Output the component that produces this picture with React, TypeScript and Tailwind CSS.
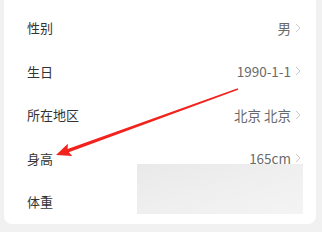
import React from "react";

const rows: { label: string; value: string }[] = [
  { label: "性别", value: "男" },
  { label: "生日", value: "1990-1-1" },
  { label: "所在地区", value: "北京 北京" },
  { label: "身高", value: "165cm" },
  { label: "体重", value: "" },
];

function Chevron() {
  return (
    <svg width="6" height="10" viewBox="0 0 6 10" className="ml-[4px]">
      <path d="M1 1 L5 5 L1 9" fill="none" stroke="#c8c8c8" strokeWidth="1" />
    </svg>
  );
}

export default function App() {
  const tip = [56, 155];
  const start = [238, 89];
  const dx = tip[0] - start[0];
  const dy = tip[1] - start[1];
  const len = Math.hypot(dx, dy);
  const ux = dx / len;
  const uy = dy / len;
  const px = -uy;
  const py = ux;
  const headLen = 15;
  const headHalf = 6.5;
  const bx = tip[0] - ux * headLen;
  const by = tip[1] - uy * headLen;
  const w0 = 0.7;
  const w1 = 1.8;
  const pts = [
    [start[0] + px * w0, start[1] + py * w0],
    [bx + ux * 2 + px * w1, by + uy * 2 + py * w1],
    [bx + px * headHalf, by + py * headHalf],
    [tip[0], tip[1]],
    [bx - px * headHalf, by - py * headHalf],
    [bx + ux * 2 - px * w1, by + uy * 2 - py * w1],
    [start[0] - px * w0, start[1] - py * w0],
  ]
    .map((p) => `${p[0].toFixed(1)},${p[1].toFixed(1)}`)
    .join(" ");

  return (
    <div
      className="relative w-[322px] h-[232px] bg-[#f1f1f1] overflow-hidden"
      style={{ fontFamily: '"Noto Sans CJK SC", "Noto Sans", sans-serif' }}
    >
      <div className="ml-[4px] mr-[6px] mt-[-10px] pt-[16px] bg-white rounded-[8px] h-[234px]">
        {rows.map((r) => (
          <div key={r.label} className="h-[43.5px] flex items-center justify-between pl-[23px] pr-[15px]">
            <span className="text-[13px] text-[#333333]">{r.label}</span>
            {r.value ? (
              <span className="flex items-center text-[13.5px] text-[#6a6a6a]">
                {r.value}
                <Chevron />
              </span>
            ) : null}
          </div>
        ))}
      </div>
      <div className="absolute left-[137px] top-[164px] w-[166px] h-[50px] bg-gradient-to-br from-[#e9e9e9] via-[#efefef] to-[#f4f4f4]" />
      <svg className="absolute left-0 top-0" width="322" height="232" viewBox="0 0 322 232">
        <polygon points={pts} fill="#f2231c" />
      </svg>
    </div>
  );
}
